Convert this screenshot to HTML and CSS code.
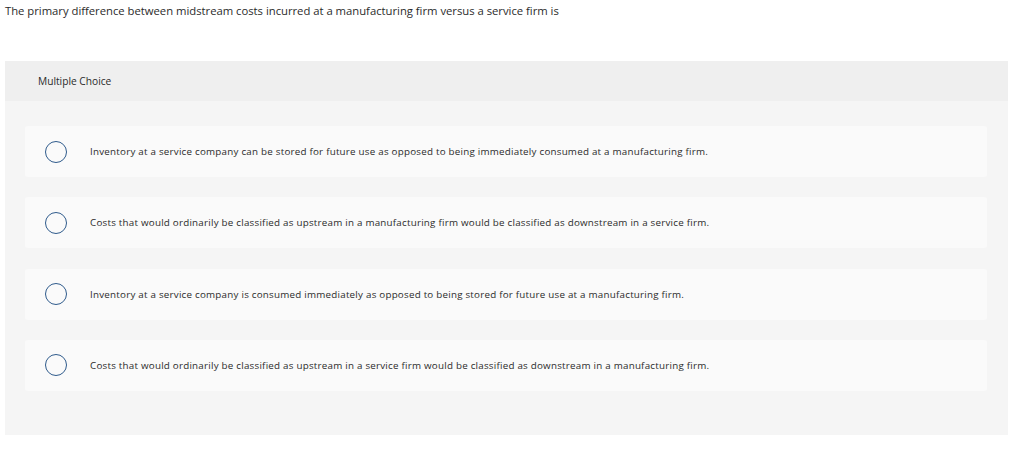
FILE: index.html
```html
<!DOCTYPE html>
<html>
<head>
<meta charset="utf-8">
<link rel="stylesheet" href="styles.css">
</head>
<body>
<p class="question">The primary difference between midstream costs incurred at a manufacturing firm versus a service firm is</p>
<div class="panel">
  <div class="panel-head">Multiple Choice</div>
  <div class="panel-body">
    <div class="option"><span class="radio"></span><span class="label">Inventory at a service company can be stored for future use as opposed to being immediately consumed at a manufacturing firm.</span></div>
    <div class="option"><span class="radio"></span><span class="label">Costs that would ordinarily be classified as upstream in a manufacturing firm would be classified as downstream in a service firm.</span></div>
    <div class="option"><span class="radio"></span><span class="label">Inventory at a service company is consumed immediately as opposed to being stored for future use at a manufacturing firm.</span></div>
    <div class="option"><span class="radio"></span><span class="label">Costs that would ordinarily be classified as upstream in a service firm would be classified as downstream in a manufacturing firm.</span></div>
  </div>
</div>
</body>
</html>
```
FILE: styles.css
```css
* { box-sizing: border-box; }
body {
  margin: 0;
  padding: 0 16px 0 5px;
  font-family: "Open Sans", "Lato", sans-serif;
  font-variant-ligatures: none;
  color: #2b2b2b;
  background: #fff;
}
.question {
  margin: 0;
  padding-top: 3px;
  font-size: 11.3px;
  line-height: 16px;
  letter-spacing: -0.02px;
}
.panel {
  margin-top: 42px;
  background: #f5f5f5;
  height: 374px;
}
.panel-head {
  background: #efefef;
  height: 40px;
  display: flex;
  align-items: center;
  padding-left: 33px;
  font-size: 10.2px;
}
.panel-body {
  padding: 25px 21px 0 20px;
  display: flex;
  flex-direction: column;
  gap: 20.3px;
}
.option {
  background: #fafafa;
  border-radius: 3px;
  height: 51px;
  display: flex;
  align-items: center;
  padding-left: 20px;
}
.radio {
  width: 22px;
  height: 22px;
  border: 1px solid #2f5b8c;
  border-radius: 50%;
  flex: none;
  margin-right: 23px;
}
.label {
  font-size: 9.8px;
  letter-spacing: 0.23px;
}
```
